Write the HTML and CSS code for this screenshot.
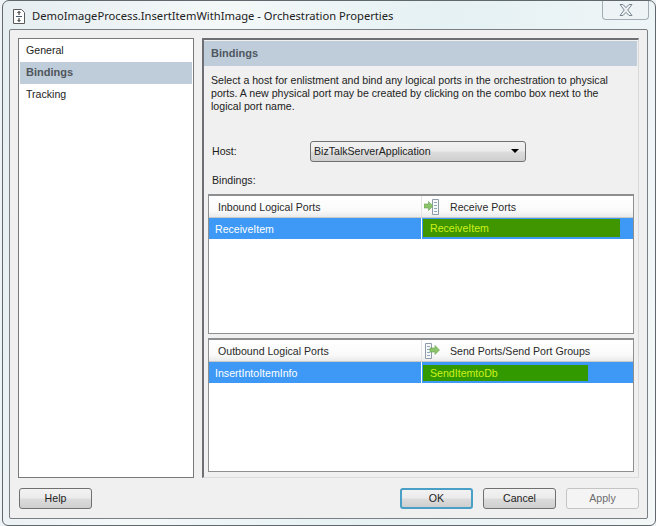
FILE: index.html
```html
<!DOCTYPE html>
<html lang="en">
<head>
<meta charset="utf-8">
<title>Orchestration Properties</title>
<link rel="stylesheet" href="styles.css">
</head>
<body>
<div class="window">
  <div class="titlebar">
    <svg class="app-icon" width="12" height="15" viewBox="0 0 12 15"><path d="M.5.500h8l3 3v11H.500z" fill="#fff" stroke="#5a5a5a"/><path d="M6 2.500v3.500M4.500 4 6 2.500 7.500 4M6 12.500V9M4.500 11 6 12.500 7.500 11" fill="none" stroke="#222"/><path d="M3 7.500h6" stroke="#456"/></svg>
    <span class="title">DemoImageProcess.InsertItemWithImage - Orchestration Properties</span>
    <div class="close"><svg width="14" height="12" viewBox="0 0 14 12"><path d="M1 .5h3l3 3.200L10 .5h3L8.800 6 13 11.500h-3L7 8.300 4 11.500H1L5.200 6z" fill="#eef1f3" stroke="#7b8791"/></svg></div>
  </div>
  <div class="client">
    <div class="main">
      <nav class="nav">
        <div class="nav-item">General</div>
        <div class="nav-item active">Bindings</div>
        <div class="nav-item">Tracking</div>
      </nav>
      <section class="panel">
        <h1 class="panel-head">Bindings</h1>
        <p class="desc">Select a host for enlistment and bind any logical ports in the orchestration to physical ports. A new physical port may be created by clicking on the combo box next to the logical port name.</p>
        <div class="host-row">
          <span class="host-label">Host:</span>
          <div class="combo"><span>BizTalkServerApplication</span><i class="arrow"></i></div>
        </div>
        <div class="bindings-label">Bindings:</div>
        <div class="grid grid-in">
          <div class="grid-head">
            <div class="cell-l head-l">Inbound Logical Ports</div>
            <div class="cell-r head-r">
              <svg class="port-icon" width="16" height="16" viewBox="0 0 16 16"><path d="M8.500.5h6v15h-6z" fill="#f6f8fa" stroke="#8f9ba8"/><path d="M10 3.500h3M10 6.500h3M10 9.500h3M10 12.500h3" stroke="#8fa6bb"/><path d="M0 5h4.500V2.500L9 7l-4.500 4.500V9H0z" fill="#8cc46c" stroke="#6aa34f" stroke-width=".6"/></svg>
              <span>Receive Ports</span>
            </div>
          </div>
          <div class="grid-row">
            <div class="cell-l row-l">ReceiveItem</div>
            <div class="cell-r row-r"><div class="port-value value-in">ReceiveItem</div></div>
          </div>
        </div>
        <div class="grid grid-out">
          <div class="grid-head">
            <div class="cell-l head-l">Outbound Logical Ports</div>
            <div class="cell-r head-r">
              <svg class="port-icon" width="16" height="16" viewBox="0 0 16 16"><path d="M1.500.5h6v15h-6z" fill="#f6f8fa" stroke="#8f9ba8"/><path d="M3 3.500h3M3 6.500h3M3 9.500h3M3 12.500h3" stroke="#8fa6bb"/><path d="M6 5h5V2.500L15.500 7 11 11.500V9H6z" fill="#8cc46c" stroke="#6aa34f" stroke-width=".6"/></svg>
              <span>Send Ports/Send Port Groups</span>
            </div>
          </div>
          <div class="grid-row">
            <div class="cell-l row-l">InsertIntoItemInfo</div>
            <div class="cell-r row-r"><div class="port-value value-out">SendItemtoDb</div></div>
          </div>
        </div>
      </section>
    </div>
    <div class="footer">
      <button class="btn btn-help">Help</button>
      <div class="footer-right">
        <button class="btn btn-ok">OK</button>
        <button class="btn">Cancel</button>
        <button class="btn btn-disabled">Apply</button>
      </div>
    </div>
  </div>
</div>
</body>
</html>
```
FILE: styles.css
```css
* { box-sizing: border-box; }
html, body { margin: 0; height: 100%; }
body {
  width: 656px;
  height: 526px;
  overflow: hidden;
  background: #eef3f5;
  font-family: "Liberation Sans", Arial, sans-serif;
  font-size: 10.6px;
  color: #1c1c1c;
}
.window {
  width: 654px;
  height: 526px;
  margin-left: 2px;
  padding: 0 7px 6px 6px;
  display: flex;
  flex-direction: column;
  border: 1px solid #60676d;
  border-radius: 7px 7px 6px 6px;
  background: linear-gradient(100deg, #e6eef1 0%, #f4f8f9 30%, #e5f1f3 60%, #f3f7f8 100%);
}
.titlebar {
  height: 28px;
  display: flex;
  align-items: center;
  flex: none;
  padding-left: 4px;
}
.app-icon { flex: none; margin-top: 2px; }
.title {
  font-family: "Noto Sans", sans-serif;
  font-size: 11.2px;
  margin-left: 7px;
  margin-top: 1px;
  color: #222;
  white-space: nowrap;
}
.close {
  margin-left: auto;
  margin-top: -10px;
  margin-right: -1px;
  width: 47px;
  height: 19px;
  border: 1px solid #a4adb3;
  border-top: 0;
  border-radius: 0 0 4px 4px;
  display: flex;
  align-items: center;
  justify-content: center;
  background: #eef4f6;
}
.client {
  flex: 1;
  background: #f0f0f0;
  border: 1px solid #7a7f84;
  border-radius: 2px;
  padding: 8px 8px 0;
  display: flex;
  flex-direction: column;
}
.main {
  height: 440px;
  display: flex;
  gap: 8px;
  flex: none;
}
.nav {
  width: 176px;
  background: #fff;
  border: 1px solid #77797b;
  padding: 1px;
  flex: none;
}
.nav-item {
  height: 22px;
  line-height: 20px;
  padding-left: 6px;
  color: #222;
}
.active {
  background: #bfcddb;
  font-weight: bold;
  font-size: 11px;
  color: #4f555b;
}
.panel {
  flex: 1;
  border-left: 2px solid #6d6f72;
  border-top: 2px solid #6d6f72;
  border-right: 1px solid #d8d8d8;
  border-bottom: 1px solid #dcdcdc;
  padding: 1px 1px 0 0;
  display: flex;
  flex-direction: column;
  min-width: 0;
}
.panel-head {
  margin: 0;
  height: 25px;
  line-height: 25px;
  padding-left: 7px;
  background: #bfcddb;
  font-size: 11px;
  font-weight: bold;
  color: #4f5760;
  flex: none;
}
.desc {
  margin: 8px 26px 0 7px;
  line-height: 13px;
  color: #222;
}
.host-row {
  display: flex;
  align-items: center;
  margin-top: 28px;
  padding-left: 8px;
  height: 21px;
}
.host-label { width: 98px; flex: none; padding-bottom: 2px; }
.combo {
  width: 216px;
  height: 21px;
  border: 1px solid #6f7174;
  border-radius: 3px;
  background: linear-gradient(#f2f2f2 0%, #ebebeb 48%, #dcdcdc 52%, #cfcfcf 100%);
  display: flex;
  align-items: center;
  justify-content: space-between;
  padding: 0 5px 1px 3px;
  color: #222;
}
.arrow {
  width: 0;
  height: 0;
  border-left: 4px solid transparent;
  border-right: 4px solid transparent;
  border-top: 4px solid #000;
  margin-right: 1px;
}
.bindings-label { margin: 11px 0 0 8px; height: 14px; line-height: 14px; }
.grid {
  margin-left: 4px;
  width: 426px;
  background: #fff;
  border: 1px solid #8d8f91;
  border-top-width: 2px;
  flex: none;
}
.grid-in { height: 140px; margin-top: 7px; }
.grid-out { height: 134px; margin-top: 4px; }
.grid-head {
  display: flex;
  height: 22px;
  border-bottom: 1px solid #c9c9c9;
  background: linear-gradient(#fff 0%, #fafafa 70%, #eaeaea 100%);
}
.grid-row {
  display: flex;
  height: 21px;
  background: #3d99f5;
}
.cell-l {
  width: 213px;
  flex: none;
  display: flex;
  align-items: center;
  white-space: nowrap;
}
.cell-r {
  flex: 1;
  min-width: 0;
  display: flex;
  align-items: center;
  white-space: nowrap;
}
.head-l { padding-left: 9px; border-right: 1px solid #e4e4e4; color: #2a2a2a; }
.head-r { padding-left: 2px; color: #2a2a2a; }
.port-icon { flex: none; margin-right: 10px; }
.row-l { padding-left: 6px; color: #fff; border-right: 1px solid #fff; }
.row-r { padding-left: 1px; }
.port-value {
  padding-left: 7px;
  color: #cdf21a;
}
.value-in {
  width: 197px;
  height: 18px;
  line-height: 18px;
  margin-bottom: 2px;
  background: #3f9600;
}
.value-out {
  width: 165px;
  height: 16px;
  line-height: 16px;
  margin-top: 1px;
  background: #339900;
}
.footer {
  flex: 1;
  display: flex;
  justify-content: space-between;
  align-items: flex-start;
  padding-top: 10px;
}
.footer-right { display: flex; gap: 10px; }
.btn {
  width: 73px;
  height: 21px;
  font: 10.6px "Liberation Sans", Arial, sans-serif;
  color: #222;
  border: 1px solid #707070;
  border-radius: 3px;
  background: linear-gradient(#f2f2f2 0%, #ebebeb 48%, #dcdcdc 52%, #cfcfcf 100%);
  padding: 0 0 2px;
}
.btn-help { margin-left: 1px; }
.btn-ok { border: 2px solid #4a9fc6; }
.btn-disabled { background: #f4f4f4; border-color: #c4c4c4; color: #6d6d6d; }
```
